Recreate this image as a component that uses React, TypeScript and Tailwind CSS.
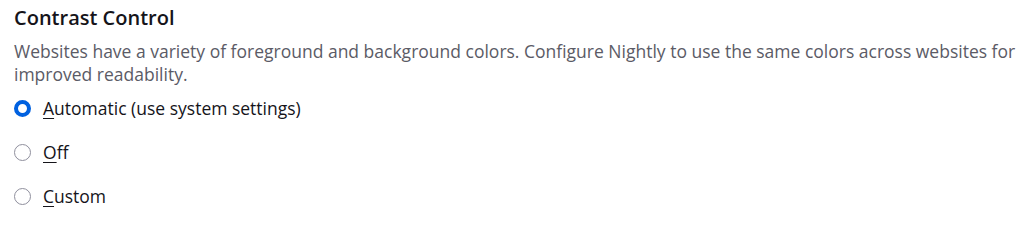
import { useState } from 'react';

const options = [
  { id: 'auto', key: 'A', rest: 'utomatic (use system settings)' },
  { id: 'off', key: 'O', rest: 'ff' },
  { id: 'custom', key: 'C', rest: 'ustom' },
];

export default function App() {
  const [value, setValue] = useState('auto');

  return (
    <div className="w-[1030px] h-[223px] bg-white px-[14px] pt-[4px] font-['Open_Sans',sans-serif] text-[#15141a]">
      <h2 className="text-[20px] leading-[28px] font-semibold">Contrast Control</h2>
      <p className="mt-[8px] text-[17.5px] leading-[23px] text-[#5b5b66]">
        Websites have a variety of foreground and background colors. Configure Nightly to use the same colors across
        websites for improved readability.
      </p>
      <div className="mt-[10px] flex flex-col gap-[20px]">
        {options.map((o) => {
          const checked = value === o.id;
          return (
            <label key={o.id} className="flex items-center gap-[12px] h-[24px] cursor-pointer">
              <input
                type="radio"
                name="contrast"
                checked={checked}
                onChange={() => setValue(o.id)}
                className="sr-only"
              />
              <span
                className={
                  checked
                    ? 'w-[17px] h-[17px] rounded-full border-[4px] border-[#0061e0] bg-white'
                    : 'w-[17px] h-[17px] rounded-full border border-[#8f8f9d] bg-white'
                }
              />
              <span className="text-[17.5px] leading-[24px]">
                <span className="underline underline-offset-[3px]">{o.key}</span>
                {o.rest}
              </span>
            </label>
          );
        })}
      </div>
    </div>
  );
}
